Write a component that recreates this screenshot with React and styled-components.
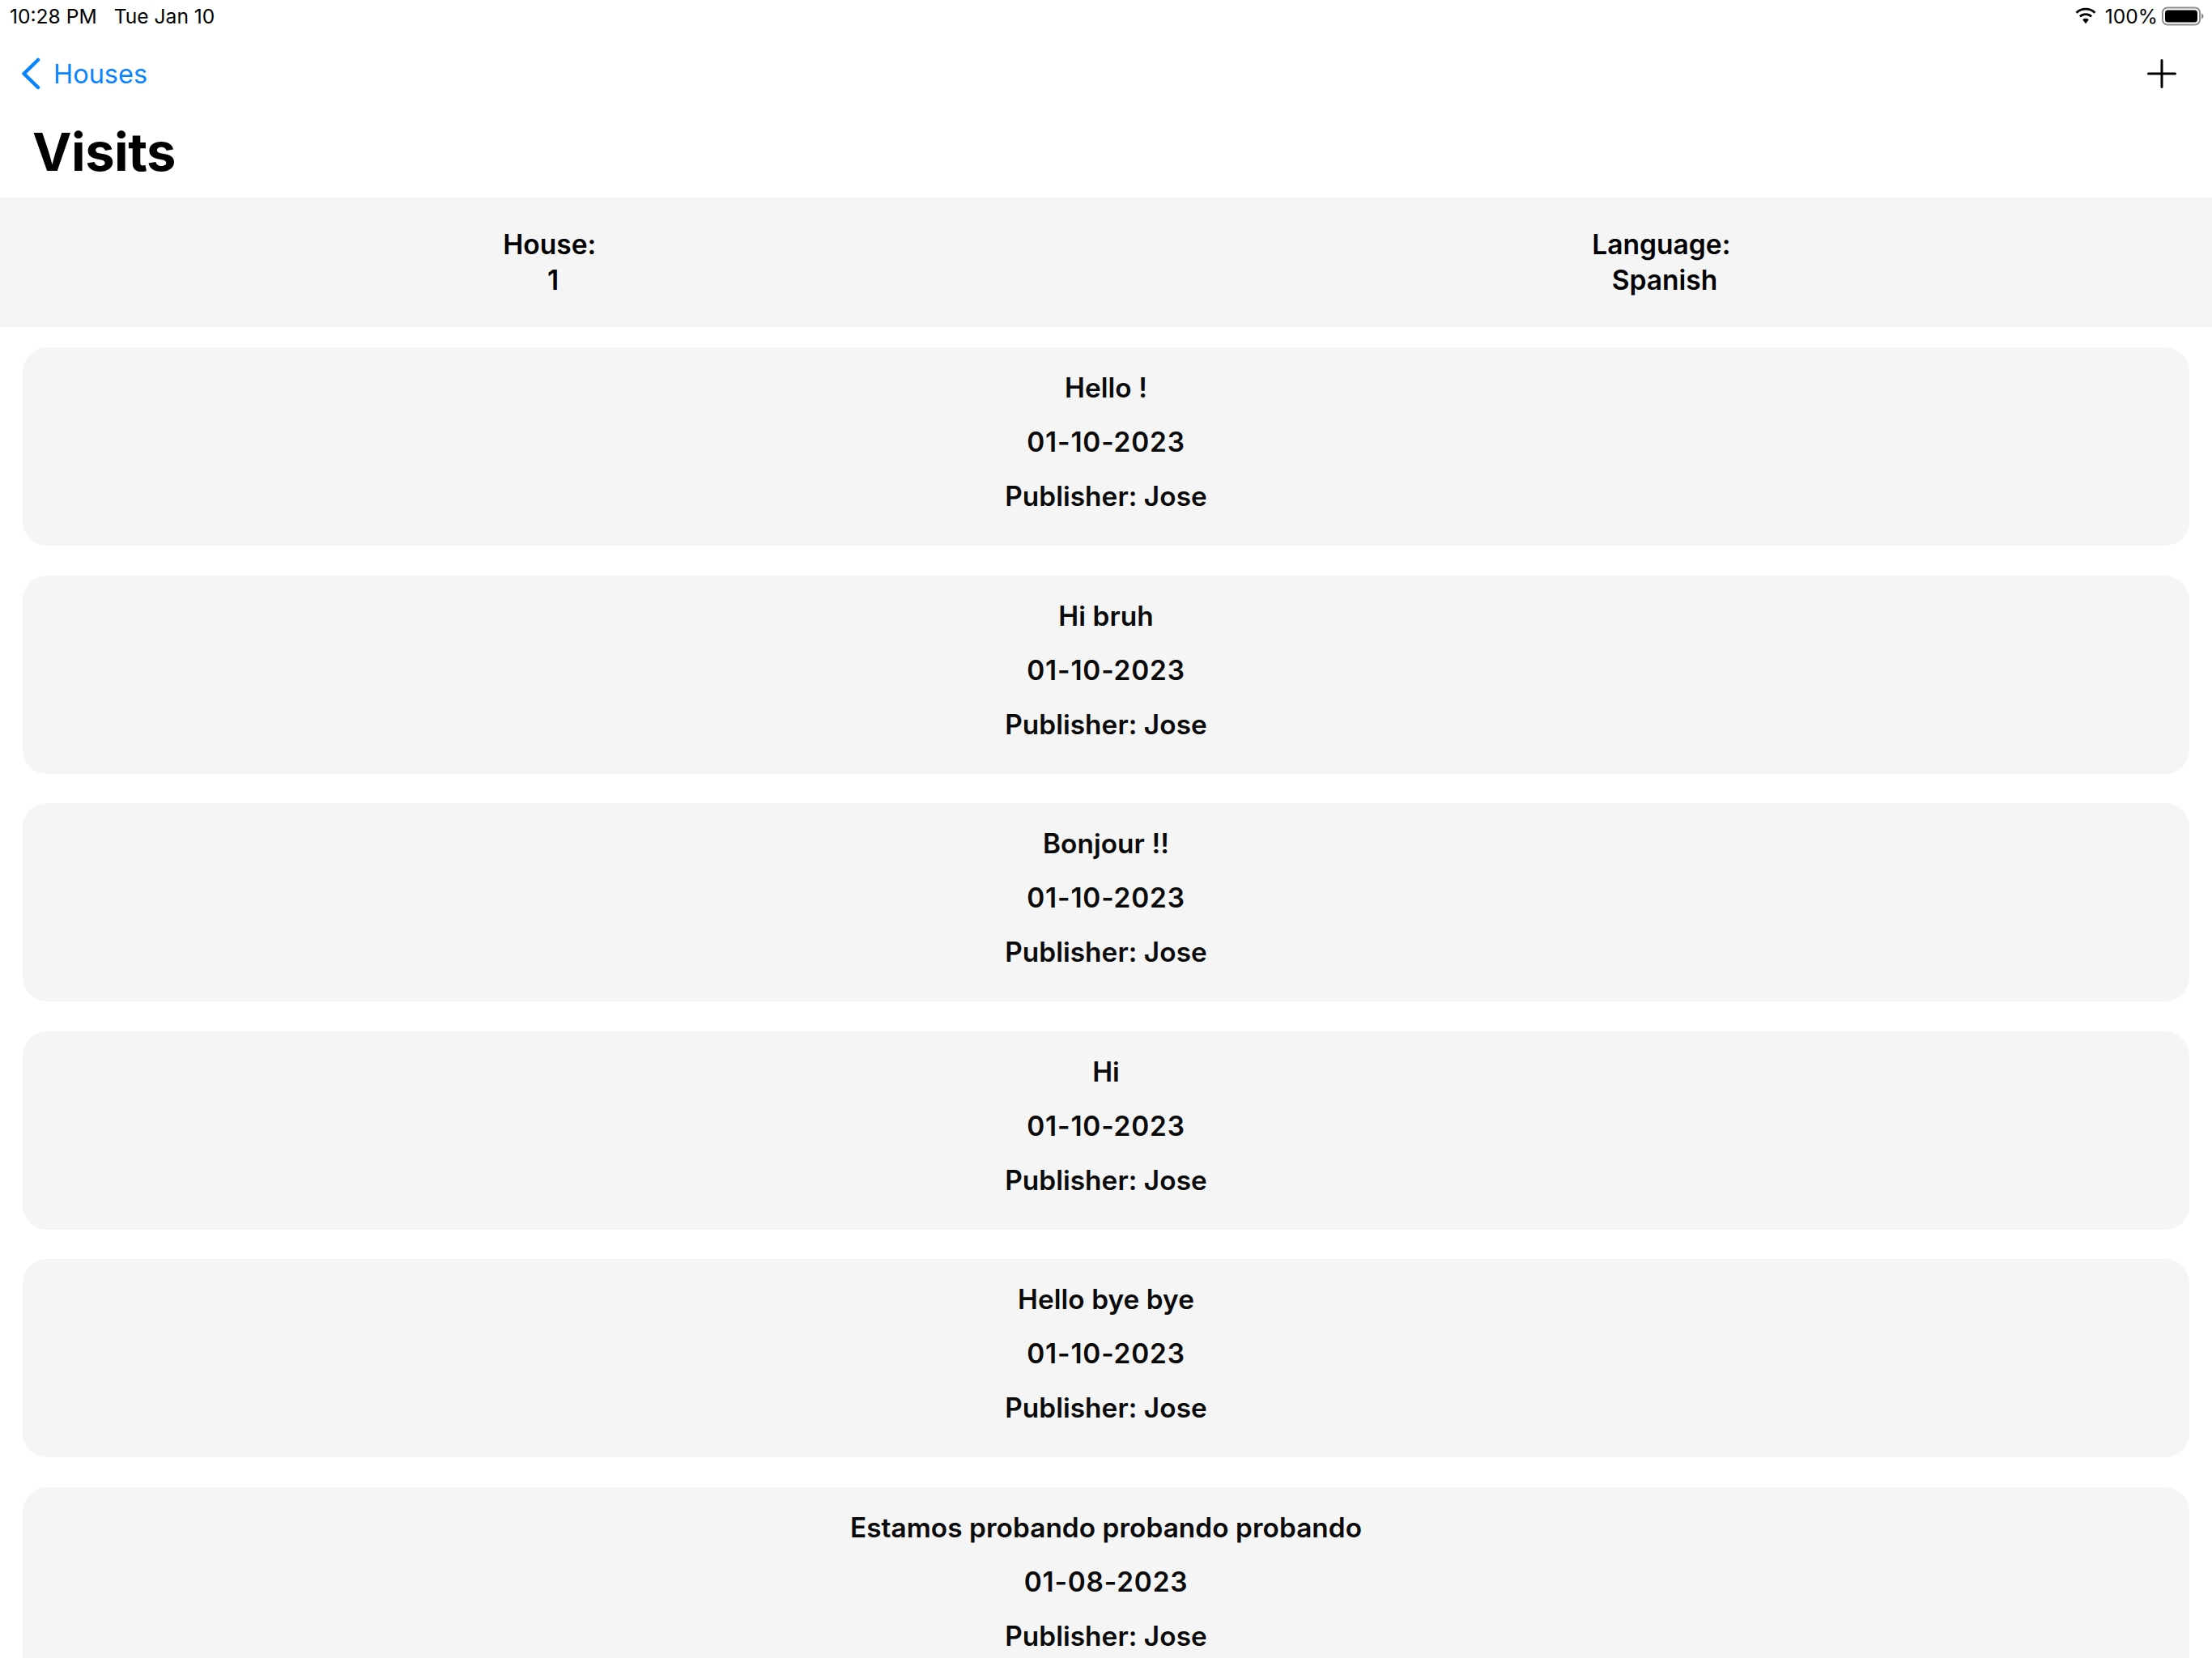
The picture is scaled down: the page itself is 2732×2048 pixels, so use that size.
import styled, { createGlobalStyle } from 'styled-components';

const GlobalStyle = createGlobalStyle`
  html, body {
    margin: 0;
    padding: 0;
    background: #ffffff;
  }
  body {
    font-family: Inter, "Liberation Sans", sans-serif;
    color: #000000;
  }
`;

const Page = styled.div`
  width: 2732px;
  height: 2048px;
  overflow: hidden;
  background: #ffffff;
`;

const StatusBar = styled.div`
  display: flex;
  justify-content: space-between;
  align-items: center;
  height: 40px;
  padding: 0 10px 0 12px;
  font-size: 24.6px;
  line-height: 40px;
`;

const StatusLeft = styled.div`
  display: flex;
  gap: 21px;
`;

const StatusRight = styled.div`
  display: flex;
  align-items: center;
  gap: 5px;
`;

const WifiSvg = styled.svg`
  margin-right: 5px;
`;

const NavBar = styled.div`
  display: flex;
  justify-content: space-between;
  align-items: center;
  height: 102px;
  padding: 0 44px 0 26px;
  box-sizing: border-box;
`;

const BackLink = styled.div`
  display: flex;
  align-items: center;
  gap: 16px;
  color: #0a84ff;
  font-size: 32.5px;
`;

const Title = styled.h1`
  margin: 0;
  height: 102px;
  padding: 0 0 0 40px;
  font-size: 65px;
  font-weight: 700;
  line-height: 92px;
  letter-spacing: -0.5px;
`;

const InfoBand = styled.div`
  display: grid;
  grid-template-columns: 1366px 1366px;
  height: 160px;
  align-items: center;
  background: #f5f5f5;
`;

const InfoCell = styled.div`
  text-align: center;
  font-size: 33.6px;
  font-weight: 600;
  line-height: 44px;
  padding-left: ${(props) => props.$inset || 0}px;
`;

const CardList = styled.div`
  display: flex;
  flex-direction: column;
  gap: 36.5px;
  padding: 25px 28px 0;
`;

const Card = styled.div`
  display: flex;
  flex-direction: column;
  flex-shrink: 0;
  justify-content: center;
  gap: 23px;
  height: 245px;
  padding-bottom: 11px;
  box-sizing: border-box;
  border-radius: 30px;
  background: #f5f5f5;
  text-align: center;
  font-size: 33.4px;
  font-weight: 600;
  line-height: 44px;
  color: #0a0a0a;
`;

const CardLine = styled.div`
  letter-spacing: ${(props) => (props.$digits ? '0.8px' : '0.05px')};
`;

const WifiIcon = () => (
  <WifiSvg width="28" height="22" viewBox="0 0 30 22" fill="#000">
    <path d="M15 3c4.300 0 8.300 1.700 11.300 4.500l2-2.200C24.700 1.900 20 0 15 0S5.300 1.900 1.700 5.300l2 2.200C6.700 4.700 10.700 3 15 3z" />
    <path d="M15 10c2.500 0 4.800 1 6.500 2.600l2.100-2.200C21.300 8.200 18.300 7 15 7s-6.300 1.200-8.600 3.400l2.100 2.200C10.200 11 12.500 10 15 10z" />
    <path d="M15 14c-1.600 0-3 .6-4.100 1.600L15 21l4.100-5.400C18 14.600 16.600 14 15 14z" />
  </WifiSvg>
);

const BatteryIcon = () => (
  <svg width="52" height="24" viewBox="0 0 52 24">
    <rect x="1" y="1.500" width="46" height="21" rx="6" fill="none" stroke="#8e8e8e" strokeWidth="2" />
    <rect x="4" y="4.500" width="40" height="15" rx="3.500" fill="#000" />
    <path d="M49 8.500c1.500.5 2.500 1.800 2.500 3.500s-1 3-2.500 3.500z" fill="#8e8e8e" />
  </svg>
);

const BackIcon = () => (
  <svg width="24" height="40" viewBox="0 0 24 40" fill="none" stroke="#0a84ff" strokeWidth="4.500" strokeLinecap="round" strokeLinejoin="round">
    <path d="M21 3 3.500 20 21 37" />
  </svg>
);

const PlusIcon = () => (
  <svg width="36" height="36" viewBox="0 0 36 36" fill="none" stroke="#000" strokeWidth="3" strokeLinecap="round">
    <path d="M18 1.500v33M1.500 18h33" />
  </svg>
);

const visits = [
  { note: 'Hello !', date: '01-10-2023', publisher: 'Jose' },
  { note: 'Hi bruh', date: '01-10-2023', publisher: 'Jose' },
  { note: 'Bonjour !!', date: '01-10-2023', publisher: 'Jose' },
  { note: 'Hi', date: '01-10-2023', publisher: 'Jose' },
  { note: 'Hello bye bye', date: '01-10-2023', publisher: 'Jose' },
  { note: 'Estamos probando probando probando', date: '01-08-2023', publisher: 'Jose' },
];

export default function App() {
  return (
    <Page>
      <GlobalStyle />
      <StatusBar>
        <StatusLeft>
          <span>10:28 PM</span>
          <span>Tue Jan 10</span>
        </StatusLeft>
        <StatusRight>
          <WifiIcon />
          <span>100%</span>
          <BatteryIcon />
        </StatusRight>
      </StatusBar>
      <NavBar>
        <BackLink>
          <BackIcon />
          <span>Houses</span>
        </BackLink>
        <PlusIcon />
      </NavBar>
      <Title>Visits</Title>
      <InfoBand>
        <InfoCell>House:&nbsp;<br />1</InfoCell>
        <InfoCell $inset={14}>Language:&nbsp;<br />Spanish</InfoCell>
      </InfoBand>
      <CardList>
        {visits.map((visit) => (
          <Card key={visit.note}>
            <CardLine>{visit.note}</CardLine>
            <CardLine $digits>{visit.date}</CardLine>
            <CardLine>Publisher: {visit.publisher}</CardLine>
          </Card>
        ))}
      </CardList>
    </Page>
  );
}
